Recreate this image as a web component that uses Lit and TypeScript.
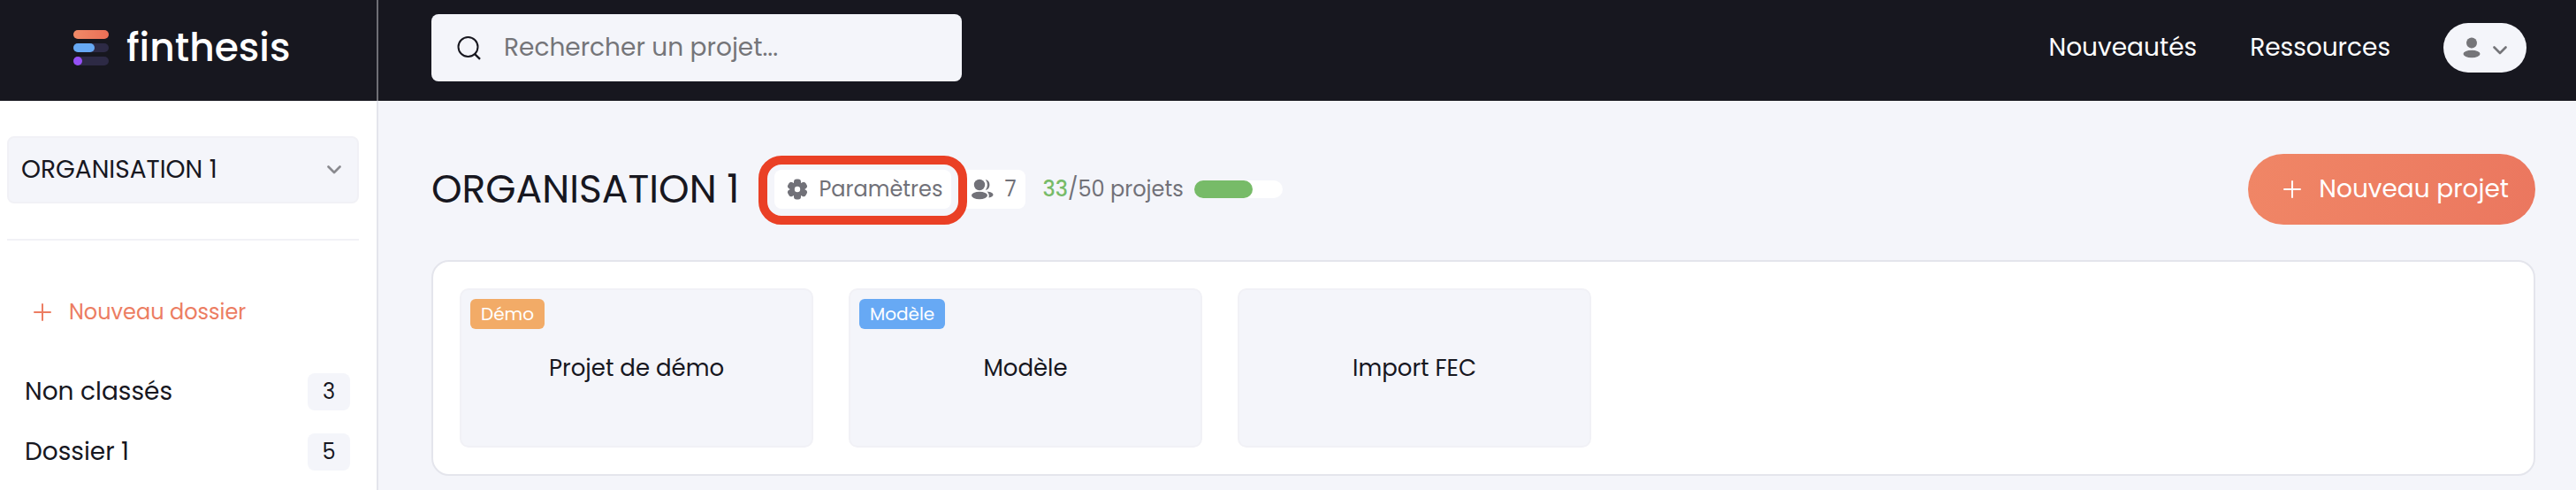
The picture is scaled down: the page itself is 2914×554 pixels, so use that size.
import { LitElement, html, css, svg, nothing } from "lit";
import { customElement, property } from "lit/decorators.js";
import { classMap } from "lit/directives/class-map.js";
import { styleMap } from "lit/directives/style-map.js";

interface Folder {
  name: string;
  count: number;
}

interface Project {
  name: string;
  tag?: string;
  tone?: "demo" | "model";
}

const folders: Folder[] = [
  { name: "Non classés", count: 3 },
  { name: "Dossier 1", count: 5 },
];

const projects: Project[] = [
  { name: "Projet de démo", tag: "Démo", tone: "demo" },
  { name: "Modèle", tag: "Modèle", tone: "model" },
  { name: "Import FEC" },
];

const base = css`
  *,
  *::before,
  *::after {
    box-sizing: border-box;
  }
  svg {
    display: block;
    flex: none;
  }
  button,
  input,
  select {
    margin: 0;
    border: 0;
    padding: 0;
    background: none;
    color: inherit;
    font: inherit;
  }
  a {
    color: inherit;
    text-decoration: none;
  }
`;

const chevron = html`<svg class="chevron" width="16" height="10" viewBox="0 0 16 10" aria-hidden="true">
  <path d="M1.5 1.5 8 8l6.5-6.5" fill="none" stroke="currentColor" stroke-width="2.6" stroke-linecap="round" stroke-linejoin="round" />
</svg>`;

const plus = html`<svg width="20" height="20" viewBox="0 0 20 20" aria-hidden="true">
  <path d="M10 1v18M1 10h18" fill="none" stroke="currentColor" stroke-width="2" stroke-linecap="round" />
</svg>`;

const gearLobes = [0, 60, 120, 180, 240, 300].map(
  (a) => svg`<rect x="8" y="0.4" width="8" height="8" rx="3" transform="rotate(${a} 12 12)" />`
);

const gear = html`<svg width="24" height="24" viewBox="0 0 24 24" aria-hidden="true">
  <g fill="currentColor">${gearLobes}<circle cx="12" cy="12" r="8" /></g>
  <circle cx="12" cy="12" r="3.2" fill="#fff" />
</svg>`;

const people = html`<svg width="26" height="24" viewBox="0 0 26 24" aria-hidden="true">
  <g fill="currentColor">
    <circle cx="10" cy="7" r="6.2" />
    <path d="M16.8 1a6.2 6.2 0 0 1 0 12 9.6 9.6 0 0 0 0-12Z" />
    <ellipse cx="10" cy="19" rx="9" ry="4.2" />
    <path d="M18.5 14.6c4 .3 7 1.8 7 3.6 0 1.5-2 2.8-5 3.2.8-2.6.1-4.9-2-6.8Z" />
  </g>
</svg>`;

@customElement("top-bar")
export class TopBar extends LitElement {
  static styles = [
    base,
    css`
      :host {
        display: grid;
        grid-template-columns: 428px 1fr;
        background: #17171f;
        color: #fff;
        font-size: 28px;
        line-height: 40px;
      }
      .brand {
        display: flex;
        align-items: center;
        gap: 20px;
        padding: 0 16px 6px 83px;
        border-right: 2px solid #6f6f75;
        font-size: 44px;
        line-height: 52px;
        font-weight: 500;
      }
      .bar {
        display: flex;
        align-items: center;
        gap: 60px;
        padding: 16px 56px 22px 60px;
      }
      .search {
        display: flex;
        align-items: center;
        gap: 26px;
        width: 600px;
        height: 76px;
        margin-right: auto;
        padding: 0 28px;
        border-radius: 8px;
        background: #f4f5fa;
        color: #17171f;
      }
      .search input {
        flex: 1;
        min-width: 0;
        outline: 0;
      }
      .search input::placeholder {
        color: #757579;
        opacity: 1;
      }
      .account {
        display: flex;
        align-items: center;
        justify-content: space-between;
        width: 94px;
        height: 56px;
        padding: 0 22px;
        border-radius: 28px;
        background: #f4f5fa;
        color: #757579;
      }
      .account .chevron {
        margin-top: 6px;
      }
    `,
  ];

  render() {
    return html`
      <a class="brand" href="#">
        <svg width="40" height="40" viewBox="0 0 40 40" aria-hidden="true">
          <defs>
            <linearGradient id="warm">
              <stop offset="0" stop-color="#f08a68" />
              <stop offset="1" stop-color="#ea6f56" />
            </linearGradient>
          </defs>
          <rect width="40" height="10" rx="5" fill="url(#warm)" />
          <rect y="15" width="40" height="10" rx="5" fill="#2d2a45" />
          <rect y="15" width="24" height="10" rx="5" fill="#67a9f4" />
          <rect y="30" width="40" height="10" rx="5" fill="#2d2a45" />
          <rect y="30" width="10" height="10" rx="5" fill="#9550f5" />
        </svg>
        <span>finthesis</span>
      </a>
      <div class="bar">
        <label class="search">
          <svg width="28" height="28" viewBox="0 0 28 28" aria-hidden="true">
            <g fill="none" stroke="currentColor" stroke-width="2">
              <circle cx="13.5" cy="13" r="11" />
              <path d="m20.8 20.8 6.2 6" stroke-width="2.4" />
            </g>
          </svg>
          <input type="search" aria-label="Rechercher un projet" placeholder="Rechercher un projet..." />
        </label>
        <a href="#">Nouveautés</a>
        <a href="#">Ressources</a>
        <button class="account" aria-label="Mon compte">
          <svg width="20" height="24" viewBox="0 0 20 24" aria-hidden="true">
            <g fill="currentColor">
              <circle cx="10" cy="6.5" r="6" />
              <ellipse cx="10" cy="19" rx="9.5" ry="4.2" />
            </g>
          </svg>
          ${chevron}
        </button>
      </div>
    `;
  }
}

@customElement("side-bar")
export class SideBar extends LitElement {
  @property({ attribute: false }) folders: Folder[] = [];

  static styles = [
    base,
    css`
      :host {
        display: block;
        padding: 40px 20px 20px 8px;
        border-right: 2px solid #e4e5ec;
        background: #fff;
        font-size: 28px;
        line-height: 42px;
      }
      .organisation {
        display: grid;
        align-items: center;
        height: 76px;
        border: 2px solid #f1f1f6;
        border-radius: 8px;
        background: #f4f5fa;
      }
      .organisation > * {
        grid-area: 1 / 1;
      }
      .organisation select {
        width: 100%;
        height: 100%;
        padding: 0 48px 0 14px;
        appearance: none;
      }
      .organisation .chevron {
        justify-self: end;
        margin-right: 18px;
        color: #8a8a8f;
        pointer-events: none;
      }
      .rule {
        height: 2px;
        margin: 40px 0 60px;
        border: 0;
        background: #f1f1f6;
      }
      .create {
        display: flex;
        align-items: center;
        gap: 20px;
        margin-left: 30px;
        color: #ec7d62;
        font-size: 24px;
      }
      .folders {
        display: grid;
        gap: 26px;
        margin: 48px 0 0;
        padding: 0 10px 0 20px;
        list-style: none;
      }
      .folder {
        display: flex;
        justify-content: space-between;
      }
      .count {
        width: 48px;
        border-radius: 8px;
        background: #f4f5fa;
        font-size: 24px;
        text-align: center;
      }
    `,
  ];

  render() {
    return html`
      <div class="organisation">
        <select aria-label="Organisation">
          <option>ORGANISATION 1</option>
        </select>
        ${chevron}
      </div>
      <hr class="rule" />
      <button class="create">${plus}<span>Nouveau dossier</span></button>
      <ul class="folders">
        ${this.folders.map(
          (f) => html`<li>
            <a class="folder" href="#"><span>${f.name}</span><span class="count">${f.count}</span></a>
          </li>`
        )}
      </ul>
    `;
  }
}

@customElement("project-card")
export class ProjectCard extends LitElement {
  @property({ attribute: false }) project!: Project;

  static styles = [
    base,
    css`
      :host {
        display: block;
      }
      .card {
        position: relative;
        display: grid;
        place-items: center;
        height: 180px;
        border: 2px solid #f1f1f6;
        border-radius: 10px;
        background: #f4f5fa;
        font-size: 26px;
        line-height: 40px;
      }
      .tag {
        position: absolute;
        top: 10px;
        left: 10px;
        padding: 0 12px;
        border-radius: 6px;
        color: #fff;
        font-size: 20px;
        line-height: 34px;
      }
      .demo {
        background: #f2ab67;
      }
      .model {
        background: #67a9f4;
      }
    `,
  ];

  render() {
    const { name, tag, tone } = this.project;
    return html`<a class="card" href="#">
      ${tag
        ? html`<span class=${classMap({ tag: true, demo: tone === "demo", model: tone === "model" })}>${tag}</span>`
        : nothing}
      <span>${name}</span>
    </a>`;
  }
}

@customElement("app-root")
export class AppRoot extends LitElement {
  private used = 33;
  private quota = 50;

  static styles = [
    base,
    css`
      :host {
        display: grid;
        grid-template-columns: 428px 1fr;
        grid-template-rows: auto 1fr;
        min-height: 100vh;
        background: #f4f5fa;
        color: #17171f;
        font-family: Poppins, Inter, "Open Sans", sans-serif;
      }
      top-bar {
        grid-column: 1 / -1;
      }
      main {
        min-width: 0;
        padding: 60px 46px 16px 60px;
      }
      .heading {
        display: flex;
        align-items: center;
        margin-bottom: 40px;
        color: #717178;
        font-size: 24px;
        line-height: 44px;
      }
      h1 {
        margin: 0 40px 0 0;
        color: #17171f;
        font-size: 44px;
        line-height: 56px;
        font-weight: 400;
      }
      .chip {
        display: flex;
        align-items: center;
        gap: 12px;
        height: 44px;
        padding: 0 10px 0 14px;
        border-radius: 8px;
        background: #fff;
      }
      .spotlight {
        position: relative;
        margin-right: 8px;
      }
      .spotlight::after {
        content: "";
        position: absolute;
        z-index: 1;
        inset: -16px -18px -18px;
        border: 10px solid #ea4025;
        border-radius: 26px;
        pointer-events: none;
      }
      .usage {
        display: flex;
        align-items: center;
        gap: 12px;
        margin-left: 20px;
      }
      .used {
        color: #77bb68;
        font-weight: 500;
      }
      .meter {
        width: 100px;
        height: 20px;
        border-radius: 10px;
        background: #fff;
      }
      .fill {
        height: 100%;
        border-radius: 10px;
        background: #77bb68;
      }
      .new-project {
        display: flex;
        align-items: center;
        gap: 20px;
        height: 80px;
        margin-left: auto;
        padding: 0 30px 0 40px;
        border-radius: 40px;
        background: linear-gradient(100deg, #f08666, #eb775f);
        color: #fff;
        font-size: 28px;
      }
      .panel {
        display: grid;
        grid-template-columns: repeat(auto-fill, 400px);
        gap: 40px;
        padding: 30px;
        border: 2px solid #e4e5ec;
        border-radius: 20px;
        background: #fff;
      }
    `,
  ];

  render() {
    return html`
      <top-bar></top-bar>
      <side-bar .folders=${folders}></side-bar>
      <main>
        <div class="heading">
          <h1>ORGANISATION 1</h1>
          <div class="spotlight">
            <button class="chip">${gear}<span>Paramètres</span></button>
          </div>
          <button class="chip" aria-label="Membres">${people}<span>7</span></button>
          <div class="usage">
            <span><span class="used">${this.used}</span>/${this.quota} projets</span>
            <div class="meter">
              <div class="fill" style=${styleMap({ width: `${(this.used / this.quota) * 100}%` })}></div>
            </div>
          </div>
          <button class="new-project">${plus}<span>Nouveau projet</span></button>
        </div>
        <section class="panel" aria-label="Projets">
          ${projects.map((p) => html`<project-card .project=${p}></project-card>`)}
        </section>
      </main>
    `;
  }
}
